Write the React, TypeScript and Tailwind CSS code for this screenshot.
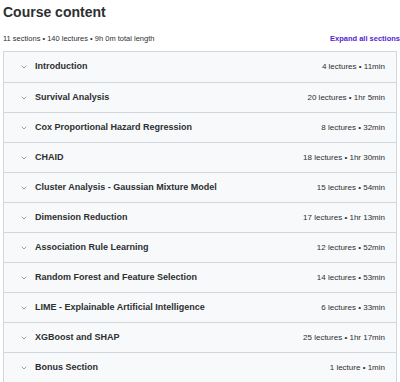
import { ChevronDown } from "lucide-react";

const sections = [
  { title: "Introduction", meta: "4 lectures • 11min" },
  { title: "Survival Analysis", meta: "20 lectures • 1hr 5min" },
  { title: "Cox Proportional Hazard Regression", meta: "8 lectures • 32min" },
  { title: "CHAID", meta: "18 lectures • 1hr 30min" },
  { title: "Cluster Analysis - Gaussian Mixture Model", meta: "15 lectures • 54min" },
  { title: "Dimension Reduction", meta: "17 lectures • 1hr 13min" },
  { title: "Association Rule Learning", meta: "12 lectures • 52min" },
  { title: "Random Forest and Feature Selection", meta: "14 lectures • 53min" },
  { title: "LIME - Explainable Artificial Intelligence", meta: "6 lectures • 33min" },
  { title: "XGBoost and SHAP", meta: "25 lectures • 1hr 17min" },
  { title: "Bonus Section", meta: "1 lecture • 1min" },
];

export default function App() {
  return (
    <div
      className="w-[400px] h-[382px] overflow-hidden bg-white text-[#2d2f31]"
      style={{ fontFamily: '"Liberation Sans", Arial, sans-serif' }}
    >
      <h2 className="pl-[3px] pt-[3px] text-[14px] font-bold leading-[18px]">Course content</h2>

      <div className="flex items-center justify-between pl-[3px] mt-[12px] h-[12px]">
        <span className="text-[7.5px]">11 sections • 140 lectures • 9h 0m total length</span>
        <button className="text-[7.5px] font-bold text-[#5624d0] whitespace-nowrap">Expand all sections</button>
      </div>

      <div className="mt-[6px] ml-[3px] w-[394px] border border-[#d1d7dc]">
        {sections.map((s, i) => (
          <div
            key={s.title}
            className={`flex items-center h-[30px] bg-[#f7f9fa] pl-[16px] pr-[11px] ${
              i > 0 ? "border-t border-[#d1d7dc]" : ""
            }`}
          >
            <ChevronDown className="w-[8px] h-[8px] text-[#6a6f73]" strokeWidth={2} />
            <span className="ml-[7px] text-[9px] font-bold flex-1">{s.title}</span>
            <span className="text-[8px]">{s.meta}</span>
          </div>
        ))}
      </div>
    </div>
  );
}
